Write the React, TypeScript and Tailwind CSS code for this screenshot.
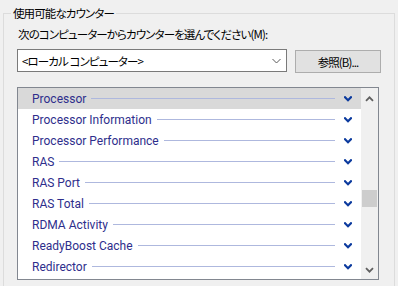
import React from "react";

const jp = "font-['Noto_Sans_CJK_JP','Noto_Sans',sans-serif] [font-feature-settings:'palt'] text-[11.5px] tracking-[-0.9px]";
const en = "font-['Roboto','Noto_Sans',sans-serif]";

const rows = [
  "Processor",
  "Processor Information",
  "Processor Performance",
  "RAS",
  "RAS Port",
  "RAS Total",
  "RDMA Activity",
  "ReadyBoost Cache",
  "Redirector",
];

function BlueChevron() {
  return (
    <svg width="8" height="6" viewBox="0 0 8 6" className="block">
      <polyline points="1,1.2 4,4.2 7,1.2" fill="none" stroke="#0b3a9e" strokeWidth="2.2" strokeLinecap="square" />
    </svg>
  );
}

export default function App() {
  return (
    <div className="w-[398px] h-[286px] overflow-hidden bg-[#f0f0f0] pt-[13px] pl-[3px] pr-[3px] text-[12px] text-black">
      <div className="relative h-[300px] border border-[#dcdcdc] pl-[13px]">
        <span className={`absolute -top-[9px] left-[7px] bg-[#f0f0f0] px-[2px] leading-[16px] ${jp}`}>
          使用可能なカウンター
        </span>
        <div className={`mt-[12px] h-[16px] pl-[1px] leading-[16px] ${jp}`}>
          次のコンピューターからカウンターを選んでください(M):
        </div>
        <div className="mt-[7px] flex items-start">
          <div className="flex h-[23px] w-[270px] items-center border border-[#7a7a7a] bg-white pl-[4px] pr-[5px]">
            <span className={`flex-1 leading-[16px] ${jp}`}>&lt;ローカル コンピューター&gt;</span>
            <svg width="9" height="6" viewBox="0 0 9 6" className="block">
              <polyline points="0.5,1 4.5,5 8.5,1" fill="none" stroke="#5a5a5a" strokeWidth="1" />
            </svg>
          </div>
          <button className={`ml-[8px] mt-[1px] flex h-[23px] w-[86px] items-center justify-center border border-[#adadad] bg-[#e1e1e1] leading-[16px] ${jp}`}>
            参照(B)...
          </button>
        </div>
        <div className="mt-[14px] flex h-[193px] w-[362px] border border-[#828790] bg-white">
          <div className="flex-1">
            {rows.map((r, i) => (
              <div
                key={r}
                className={`flex h-[21px] items-center pl-[14px] pr-[9px] ${i === 0 ? "bg-[#d9d9d9]" : ""}`}
              >
                <span className={`leading-[16px] text-[#2e2e8c] ${en}`}>{r}</span>
                <div className="ml-[5px] mr-[9px] h-px flex-1 bg-[#aeb8de]" />
                <BlueChevron />
              </div>
            ))}
          </div>
          <div className="flex w-[17px] flex-col bg-[#f0f0f0]">
            <div className="flex h-[17px] items-center justify-center pt-[4px]">
              <svg width="9" height="6" viewBox="0 0 9 6" className="block">
                <polyline points="1,4.8 4.5,1.3 8,4.8" fill="none" stroke="#606060" strokeWidth="1.8" />
              </svg>
            </div>
            <div className="flex-1">
              <div className="mx-[1px] mt-[85px] h-[17px] bg-[#cdcdcd]" />
            </div>
            <div className="flex h-[17px] items-center justify-center pb-[2px]">
              <svg width="9" height="6" viewBox="0 0 9 6" className="block">
                <polyline points="1,1.2 4.5,4.7 8,1.2" fill="none" stroke="#606060" strokeWidth="1.8" />
              </svg>
            </div>
          </div>
        </div>
      </div>
    </div>
  );
}
